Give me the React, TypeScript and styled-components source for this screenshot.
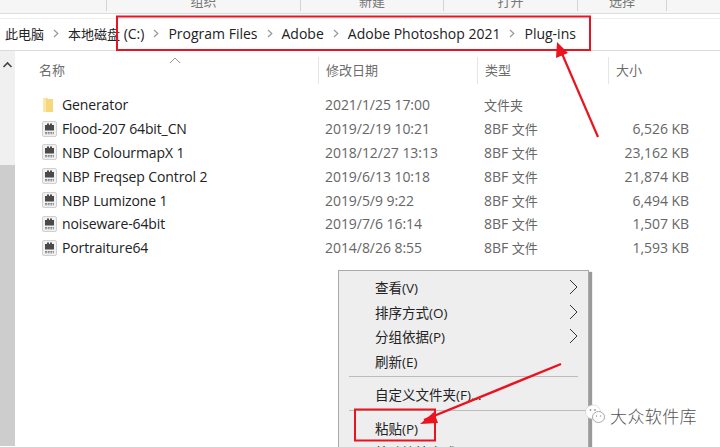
import React from "react";
import styled, { createGlobalStyle } from "styled-components";

const Global = createGlobalStyle`
  html, body { margin: 0; padding: 0; background: #fff; }
  body { font-family: "Open Sans", "Noto Sans CJK SC", sans-serif; }
`;
const cjk = `"Open Sans", "Noto Sans CJK SC", sans-serif`;

const Page = styled.div`
  position: relative; width: 720px; height: 447px; overflow: hidden; background: #fff;
  font-family: ${cjk}; color: #222;
`;
const Ribbon = styled.div`
  display: grid; grid-template-columns: 107px 194px 143px 134px 89px 53px;
  height: 13px; overflow: hidden; background: #f6f6f6; border-bottom: 1px solid #dcdcdc;
`;
const RibbonGroup = styled.div`
  display: flex; justify-content: center; align-items: flex-end; height: 11px;
  border-right: 1px solid #d4d4d4; font-size: 13px; line-height: 20px; color: #777;
`;
const Gap = styled.div`height: 4px; background: #fff;`;
const AddressBar = styled.div`
  display: flex; align-items: center; height: 33px; padding: 0 0 2px 5px; box-sizing: border-box;
  border-top: 1px solid #eee; border-bottom: 1px solid #dadada; font-size: 14px; color: #222;
`;
const Crumb = styled.span`white-space: nowrap;`;
const Han = styled.span`font-size: 13px; letter-spacing: 0;`;
const Sep = styled.svg`width: 6px; height: 9px; margin: 0 9px; flex: none;`;
const Body = styled.div`display: flex; height: 395px;`;
const ScrollTrack = styled.div`
  display: flex; flex-direction: column; width: 15px; background: #f0f0f0; flex: none;
`;
const ScrollArrow = styled.svg`width: 15px; height: 15px; margin-top: 7px; flex: none;`;
const ScrollSpace = styled.div`height: 92px;`;
const ScrollThumb = styled.div`flex: 1; background: #cdcdcd;`;
const List = styled.div`position: relative; flex: 1; padding-left: 24px;`;
const Header = styled.div`
  display: grid; grid-template-columns: 279px 159px 131px 88px; height: 27px; margin-top: 7px;
  font-size: 13px; color: #6d6d6d; margin-bottom: 8px;
`;
const HeaderCell = styled.div`
  display: flex; align-items: flex-start; height: 27px; line-height: 27px; margin-top: -1px;
  padding-left: 7px; border-left: 1px solid #e5e5e5;
  &:first-child { padding-left: 0; border-left: 0; }
`;
const SortCaret = styled.svg`
  position: absolute; left: 154px; top: 6px; width: 12px; height: 7px;
`;
const Row = styled.div`
  display: grid; grid-template-columns: 23px 263px 159px 100px 105px; align-items: center;
  height: 23.8px; font-size: 14px; color: #333;
`;
const Name = styled.span`white-space: nowrap; color: #222; letter-spacing: -0.12px;`;
const Meta = styled.span`white-space: nowrap; color: #666; letter-spacing: -0.05px;`;
const Size = styled(Meta)`text-align: right;`;
const IconBox = styled.svg`width: 15px; height: 16px; margin-left: 3px;`;
const Menu = styled.div`
  position: absolute; left: 338px; top: 270px; width: 251px; height: 190px; box-sizing: border-box;
  background: #eeeeee; border: 1px solid #a9a9a9; box-shadow: 3px 2px 1px #9a9a9a;
  padding-top: 4px; font-size: 13.5px; color: #222;
`;
const MenuItem = styled.div`
  display: flex; justify-content: space-between; align-items: center; height: 24.5px;
  padding: 0 10px 0 36px; white-space: nowrap;
`;
const MenuRule = styled.div`height: 1px; background: #bcbcbc; margin: ${(p: { $m: string }) => p.$m};`;
const Chevron = styled.svg`width: 9px; height: 16px;`;
const Annotation = styled.svg`position: absolute; left: 0; top: 0; width: 720px; height: 447px; pointer-events: none;`;
const Watermark = styled.div`
  position: absolute; left: 585px; top: 402px; display: flex; align-items: center; gap: 5px;
  font-size: 17px; font-weight: 300; color: #555; letter-spacing: 0.4px;
`;
const WeChat = styled.svg`width: 20px; height: 26px;`;

const Chev = () => (
  <Sep viewBox="0 0 6 9"><path d="M1 1 L4.8 4.5 L1 8" fill="none" stroke="#999" strokeWidth="1.2" /></Sep>
);
const Folder = () => (
  <IconBox viewBox="0 0 15 16">
    <path d="M1 1 H5 L6 2 H11 V15 H1 Z" fill="#f6d77c" />
    <path d="M1 1 H4 V15 H1 Z" fill="#fbe7a6" />
  </IconBox>
);
const Plugin = () => (
  <IconBox viewBox="0 0 15 16">
    <rect x="0.5" y="0.5" width="14" height="15" rx="1.5" fill="#f1f1f1" stroke="#d0d0d0" />
    <path d="M3 4 H5 V2.5 H7 V4 H8 V2.5 H10 V4 H12 V9.5 H3 Z" fill="#4a4a4a" />
    <path d="M3 11.5 H12 M3 12.8 H12" stroke="#777" strokeWidth="0.9" strokeDasharray="2 0.7" />
  </IconBox>
);

const files = [
  ["Flood-207 64bit_CN", "2019/2/19 10:21", "6,526 KB"],
  ["NBP ColourmapX 1", "2018/12/27 13:13", "23,162 KB"],
  ["NBP Freqsep Control 2", "2019/6/13 10:18", "21,874 KB"],
  ["NBP Lumizone 1", "2019/5/9 9:22", "6,494 KB"],
  ["noiseware-64bit", "2019/7/6 16:14", "1,507 KB"],
  ["Portraiture64", "2014/8/26 8:55", "1,593 KB"],
];

const MenuArrow = () => (
  <Chevron viewBox="0 0 9 16"><path d="M1 1 L8 8 L1 15" fill="none" stroke="#333" strokeWidth="1" /></Chevron>
);

export default function App() {
  return (
    <Page>
      <Global />
      <Ribbon>
        <RibbonGroup />
        <RibbonGroup>组织</RibbonGroup>
        <RibbonGroup>新建</RibbonGroup>
        <RibbonGroup>打开</RibbonGroup>
        <RibbonGroup>选择</RibbonGroup>
      </Ribbon>
      <Gap />
      <AddressBar>
        <Crumb><Han>此电脑</Han></Crumb><Chev />
        <Crumb><Han>本地磁盘</Han> (C:)</Crumb><Chev />
        <Crumb>Program Files</Crumb><Chev />
        <Crumb>Adobe</Crumb><Chev />
        <Crumb>Adobe Photoshop 2021</Crumb><Chev />
        <Crumb>Plug-ins</Crumb>
      </AddressBar>
      <Body>
        <ScrollTrack>
          <ScrollArrow viewBox="0 0 15 15"><path d="M3.5 9 L7.5 5 L11.5 9" fill="none" stroke="#444" strokeWidth="1.6" /></ScrollArrow>
          <ScrollSpace />
          <ScrollThumb />
        </ScrollTrack>
        <List>
          <SortCaret viewBox="0 0 12 7"><path d="M1 6 L6 1 L11 6" fill="none" stroke="#999" strokeWidth="1" /></SortCaret>
          <Header>
            <HeaderCell>名称</HeaderCell>
            <HeaderCell>修改日期</HeaderCell>
            <HeaderCell>类型</HeaderCell>
            <HeaderCell>大小</HeaderCell>
          </Header>
          <Row>
            <Folder />
            <Name>Generator</Name>
            <Meta>2021/1/25 17:00</Meta>
            <Meta><Han>文件夹</Han></Meta>
          </Row>
          {files.map((f) => (
            <Row key={f[0]}>
              <Plugin />
              <Name>{f[0]}</Name>
              <Meta>{f[1]}</Meta>
              <Meta>8BF <Han>文件</Han></Meta>
              <Size>{f[2]}</Size>
            </Row>
          ))}
        </List>
      </Body>
      <Menu>
        <MenuItem>查看(V)<MenuArrow /></MenuItem>
        <MenuItem>排序方式(O)<MenuArrow /></MenuItem>
        <MenuItem>分组依据(P)<MenuArrow /></MenuItem>
        <MenuItem>刷新(E)</MenuItem>
        <MenuRule $m="3px 10px 5px 10px" />
        <MenuItem>自定义文件夹(F)...</MenuItem>
        <MenuRule $m="3px 0 5px 10px" />
        <MenuItem>粘贴(P)</MenuItem>
        <MenuItem>粘贴快捷方式(S)</MenuItem>
      </Menu>
      <Watermark>
        <WeChat viewBox="0 0 20 26">
          <ellipse cx="8" cy="10" rx="7.5" ry="7" fill="#fff" stroke="#ccc" strokeWidth="0.6" />
          <ellipse cx="13.5" cy="15" rx="6" ry="5.5" fill="#fff" stroke="#888" strokeWidth="0.7" />
          <circle cx="5.5" cy="8" r="0.9" fill="#999" /><circle cx="10" cy="8" r="0.9" fill="#999" />
          <circle cx="11.5" cy="14" r="0.7" fill="#999" /><circle cx="15.5" cy="14" r="0.7" fill="#999" />
        </WeChat>
        大众软件库
      </Watermark>
      <Annotation viewBox="0 0 720 447">
        <rect x="117" y="16.5" width="473" height="33.5" fill="none" stroke="#e8141f" strokeWidth="2" />
        <path d="M598 137 L560 49" stroke="#e8141f" strokeWidth="2.2" fill="none" />
        <path d="M557 42 L568 53 L556 58 Z" fill="#e8141f" />
        <rect x="355" y="409.5" width="80" height="31" fill="none" stroke="#e8141f" strokeWidth="2" />
        <path d="M561 364 L424 420" stroke="#e8141f" strokeWidth="2.4" fill="none" />
        <path d="M420 424 L434 412 L438 423 Z" fill="#e8141f" />
      </Annotation>
    </Page>
  );
}
